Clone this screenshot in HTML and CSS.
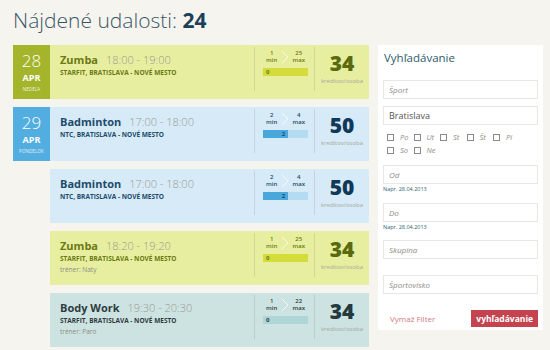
FILE: index.html
```html
<!DOCTYPE html>
<html lang="sk">
<head>
<meta charset="utf-8">
<title>Nájdené udalosti</title>
<link rel="stylesheet" href="styles.css">
</head>
<body>
<h1 class="heading">Nájdené udalosti: <b>24</b></h1>
<div class="layout">
  <div class="events">
    <div class="card yellow">
      <div class="date"><span class="day">28</span><span class="mon">APR</span><span class="dow">NEDEĽA</span></div>
      <div class="info">
        <div class="title"><b>Zumba</b><span class="time">18:00 - 19:00</span></div>
        <div class="loc">STARFIT, BRATISLAVA - NOVÉ MESTO</div>
      </div>
      <div class="cap">
        <div class="range">
          <div class="lim"><span>1</span><span>min</span></div>
          <svg class="chev" width="8" height="14" viewBox="0 0 8 14"><path d="M1 1 L7 7 L1 13" fill="none" stroke="currentColor" stroke-width="1"/></svg>
          <div class="lim"><span>25</span><span>max</span></div>
        </div>
        <div class="bar"><span class="num">0</span></div>
      </div>
      <div class="price"><b>34</b><span>kreditov/osoba</span></div>
    </div>

    <div class="card blue">
      <div class="date"><span class="day">29</span><span class="mon">APR</span><span class="dow">PONDELOK</span></div>
      <div class="info">
        <div class="title"><b>Badminton</b><span class="time">17:00 - 18:00</span></div>
        <div class="loc">NTC, BRATISLAVA - NOVÉ MESTO</div>
      </div>
      <div class="cap">
        <div class="range">
          <div class="lim"><span>2</span><span>min</span></div>
          <svg class="chev" width="8" height="14" viewBox="0 0 8 14"><path d="M1 1 L7 7 L1 13" fill="none" stroke="currentColor" stroke-width="1"/></svg>
          <div class="lim"><span>4</span><span>max</span></div>
        </div>
        <div class="bar"><span class="fill" style="width:56%">2</span></div>
      </div>
      <div class="price"><b>50</b><span>kreditov/osoba</span></div>
    </div>

    <div class="card blue nodate">
      <div class="info">
        <div class="title"><b>Badminton</b><span class="time">17:00 - 18:00</span></div>
        <div class="loc">NTC, BRATISLAVA - NOVÉ MESTO</div>
      </div>
      <div class="cap">
        <div class="range">
          <div class="lim"><span>2</span><span>min</span></div>
          <svg class="chev" width="8" height="14" viewBox="0 0 8 14"><path d="M1 1 L7 7 L1 13" fill="none" stroke="currentColor" stroke-width="1"/></svg>
          <div class="lim"><span>4</span><span>max</span></div>
        </div>
        <div class="bar"><span class="fill" style="width:56%">2</span></div>
      </div>
      <div class="price"><b>50</b><span>kreditov/osoba</span></div>
    </div>

    <div class="card yellow nodate">
      <div class="info">
        <div class="title"><b>Zumba</b><span class="time">18:20 - 19:20</span></div>
        <div class="loc">STARFIT, BRATISLAVA - NOVÉ MESTO</div>
        <div class="trainer">tréner: Naty</div>
      </div>
      <div class="cap">
        <div class="range">
          <div class="lim"><span>1</span><span>min</span></div>
          <svg class="chev" width="8" height="14" viewBox="0 0 8 14"><path d="M1 1 L7 7 L1 13" fill="none" stroke="currentColor" stroke-width="1"/></svg>
          <div class="lim"><span>25</span><span>max</span></div>
        </div>
        <div class="bar"><span class="num">0</span></div>
      </div>
      <div class="price"><b>34</b><span>kreditov/osoba</span></div>
    </div>

    <div class="card teal nodate">
      <div class="info">
        <div class="title"><b>Body Work</b><span class="time">19:30 - 20:30</span></div>
        <div class="loc">STARFIT, BRATISLAVA - NOVÉ MESTO</div>
        <div class="trainer">tréner: Paro</div>
      </div>
      <div class="cap">
        <div class="range">
          <div class="lim"><span>1</span><span>min</span></div>
          <svg class="chev" width="8" height="14" viewBox="0 0 8 14"><path d="M1 1 L7 7 L1 13" fill="none" stroke="currentColor" stroke-width="1"/></svg>
          <div class="lim"><span>22</span><span>max</span></div>
        </div>
        <div class="bar"><span class="num">0</span></div>
      </div>
      <div class="price"><b>34</b><span>kreditov/osoba</span></div>
    </div>
  </div>

  <aside class="search">
    <h2 class="search-title">Vyhľadávanie</h2>
    <div class="field"><span class="ph">Šport</span></div>
    <div class="field"><span class="val">Bratislava</span></div>
    <div class="days">
      <label class="day-opt"><span class="box"></span>Po</label>
      <label class="day-opt"><span class="box"></span>Ut</label>
      <label class="day-opt"><span class="box"></span>St</label>
      <label class="day-opt"><span class="box"></span>Št</label>
      <label class="day-opt"><span class="box"></span>Pi</label>
      <label class="day-opt"><span class="box"></span>So</label>
      <label class="day-opt"><span class="box"></span>Ne</label>
    </div>
    <div class="field date-field"><span class="ph">Od</span></div>
    <div class="hint">Napr. 28.04.2013</div>
    <div class="field date-field"><span class="ph">Do</span></div>
    <div class="hint">Napr. 28.04.2013</div>
    <div class="field group-field"><span class="ph">Skupina</span></div>
    <div class="field venue-field"><span class="ph">Športovisko</span></div>
    <div class="actions">
      <span class="clear">Vymaž Filter</span>
      <span class="btn">vyhľadávanie</span>
    </div>
  </aside>
</div>
</body>
</html>
```

FILE: styles.css
```css
* { box-sizing: border-box; }
html, body { margin: 0; padding: 0; }
body {
  background: #f6f4ef;
  font-family: "Open Sans", "Liberation Sans", sans-serif;
  width: 550px;
  height: 350px;
  overflow: hidden;
  padding: 0 0 0 13px;
}
.heading {
  margin: 0;
  padding-top: 6px;
  height: 45px;
  font-size: 21px;
  line-height: 28px;
  font-weight: 300;
  color: #3a5766;
}
.heading b { font-weight: 700; color: #1b4058; }

.layout { display: flex; gap: 9px; align-items: flex-start; }
.events { width: 356px; display: flex; flex-direction: column; gap: 8px; }

.card { height: 54px; display: flex; }
.card.nodate { margin-left: 37px; }
.yellow { background: #e8ee9f; color: #6a7a14; }
.blue { background: #d7eaf7; color: #1c4c6b; }
.teal { background: #cde3e1; color: #2f3b3f; }

.date {
  width: 37px;
  color: #fff;
  display: flex;
  flex-direction: column;
  align-items: center;
  padding-top: 4px;
}
.yellow .date { background: #a4b52b; }
.blue .date { background: #52ade0; }
.date .day { font-size: 17px; font-weight: 300; line-height: 23px; }
.date .mon { font-size: 9px; font-weight: 700; line-height: 12px; }
.date .dow { font-size: 4.5px; line-height: 7px; margin-top: 2px; opacity: .85; letter-spacing: .1px; }

.info { flex: 1; padding: 6px 0 0 10px; }
.title { line-height: 14px; white-space: nowrap; }
.title b { font-size: 11px; font-weight: 700; }
.title .time { font-size: 11px; font-weight: 300; color: #9a9a92; margin-left: 8px; }
.loc { font-size: 6.5px; font-weight: 700; line-height: 10px; margin-top: 1px; text-transform: uppercase; white-space: nowrap; }
.trainer { font-size: 6.5px; line-height: 11px; color: #8c8c84; }

.cap {
  width: 61px;
  margin: 2px 0 8px;
  border-left: 1px solid rgba(0,0,0,.09);
  border-right: 1px solid rgba(0,0,0,.09);
  padding: 3px 0 0 8px;
}
.range { display: flex; align-items: center; width: 46px; justify-content: space-between; padding: 0 4px 0 3px; }
.lim { display: flex; flex-direction: column; align-items: center; font-size: 6px; line-height: 7px; font-weight: 600; }
.chev { color: rgba(255,255,255,.7); }
.bar { margin-top: 4px; width: 45px; height: 8px; display: flex; font-size: 6px; line-height: 8px; font-weight: 700; }
.yellow .bar { background: #d3dc3b; }
.blue .bar { background: #b3dbf2; }
.teal .bar { background: #aed6d8; }
.bar .num { padding-left: 3px; }
.bar .fill { background: #4aa7db; text-align: right; padding-right: 3px; }

.price {
  width: 54px;
  display: flex;
  flex-direction: column;
  align-items: center;
  padding-top: 5px;
}
.price b { font-size: 21px; line-height: 26px; font-weight: 800; }
.yellow .price b { color: #5a6a0f; }
.blue .price b { color: #0e395a; }
.teal .price b { color: #253a3f; }
.price span { font-size: 6px; color: #a8a8a0; line-height: 8px; margin-top: 1px; }

.search {
  width: 165px;
  height: 285px;
  background: #fff;
  padding: 5px 5px 0;
  display: flex;
  flex-direction: column;
}
.search-title { margin: 0 0 0 1px; font-size: 11.5px; font-weight: 400; line-height: 16px; color: #2c5c6b; }
.field {
  height: 19px;
  border: 1px solid #e7e7e3;
  padding-left: 5px;
  display: flex;
  align-items: center;
  font-size: 8px;
  margin-top: 7px;
}
.search-title + .field { margin-top: 14px; }
.ph { font-style: italic; color: #8e8e88; }
.val { color: #555; font-size: 9px; }
.days { display: flex; flex-wrap: wrap; padding: 8px 0 0 4px; row-gap: 4px; width: 140px; }
.day-opt { display: flex; align-items: center; width: 26.5px; font-size: 7.5px; font-style: italic; color: #8e8e88; line-height: 9px; }
.day-opt .box { width: 7px; height: 7px; border: 1px solid #8a8a8a; margin-right: 6px; background: #fff; }
.date-field { margin-top: 9px; }
.days + .date-field { margin-top: 10px; }
.hint { font-size: 5.5px; color: #2f6274; line-height: 9px; margin-top: 1px; }
.group-field { margin-top: 8px; }
.venue-field { margin-top: 16px; }
.actions { display: flex; justify-content: space-between; align-items: center; margin-top: 16px; padding-left: 7px; }
.clear { font-size: 8px; color: #d07b85; }
.btn { background: #c5434f; color: #fff; font-size: 8.5px; font-weight: 700; height: 17px; line-height: 17px; padding: 0 5px; }
```
